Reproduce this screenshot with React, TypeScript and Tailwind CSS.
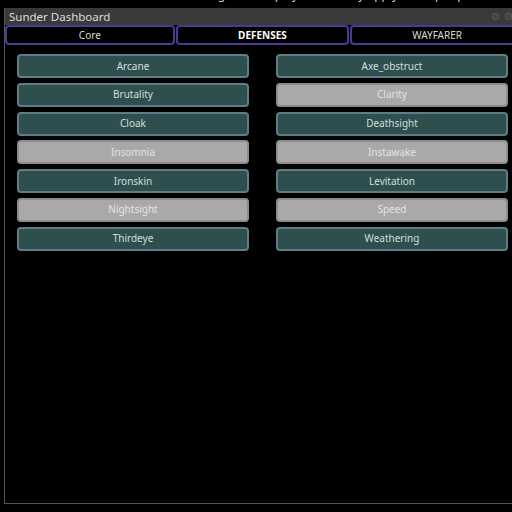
import React from "react";

const defenses: { name: string; on: boolean }[] = [
  { name: "Arcane", on: true },
  { name: "Axe_obstruct", on: true },
  { name: "Brutality", on: true },
  { name: "Clarity", on: false },
  { name: "Cloak", on: true },
  { name: "Deathsight", on: true },
  { name: "Insomnia", on: false },
  { name: "Instawake", on: false },
  { name: "Ironskin", on: true },
  { name: "Levitation", on: true },
  { name: "Nightsight", on: false },
  { name: "Speed", on: false },
  { name: "Thirdeye", on: true },
  { name: "Weathering", on: true },
];

const tabs = [
  { label: "Core", w: "w-[170px]" },
  { label: "DEFENSES", w: "w-[174px]" },
  { label: "WAYFARER", w: "w-[174px]" },
];

const DefenseButton = ({ name, on }: { name: string; on: boolean }) => (
  <button
    className={
      on
        ? "h-[24px] rounded-[4px] border-2 border-[#5f7d88] bg-[#2f4f4f] text-[10px] text-[#cfdede]"
        : "h-[24px] rounded-[4px] border-2 border-[#8c8c8c] bg-[#a9a9a9] text-[10px] text-[#e4e4e4]"
    }
  >
    {name}
  </button>
);

export default function App() {
  return (
    <div
      className="w-[512px] h-[512px] overflow-hidden bg-black"
      style={{ fontFamily: '"Noto Sans", "Open Sans", sans-serif' }}
    >
      {/* bits of the app behind the window */}
      <div className="h-[8px] overflow-hidden pl-[186px]">
        <div className="-mt-[12px] text-[12px] leading-[14px] text-[#cfcfcf] whitespace-nowrap">
          settings and display values may apply to output panels of the sky
        </div>
      </div>

      <div className="ml-[4px] w-[520px] h-[496px] flex flex-col border-l border-b border-[#555]">
        <div className="h-[17px] bg-[#3a3a3a] flex items-center justify-between pl-[4px] pr-[4px]">
          <span className="text-[11.5px] text-[#dcdcdc] leading-none">Sunder Dashboard</span>
          <div className="flex gap-[6px] mr-[8px]">
            <div className="w-[7px] h-[7px] rounded-[2px] border border-[#555] bg-[#444]" />
            <div className="w-[7px] h-[7px] rounded-[2px] border border-[#555] bg-[#444]" />
          </div>
        </div>

        <div className="flex h-[20px] gap-[1px]">
          {tabs.map((t) => (
            <div
              key={t.label}
              className={
                "flex items-center justify-center rounded-[4px] border-2 border-[#4b3a93] bg-black text-[10px] " +
                t.w +
                (t.label === "DEFENSES" ? " font-bold text-white" : " text-[#d8d8d8]")
              }
            >
              {t.label}
            </div>
          ))}
        </div>

        <div className="grid grid-cols-[232px_232px] gap-x-[27px] gap-y-[4.8px] pl-[12px] pt-[9px]">
          {defenses.map((d) => (
            <DefenseButton key={d.name} {...d} />
          ))}
        </div>
      </div>
    </div>
  );
}
